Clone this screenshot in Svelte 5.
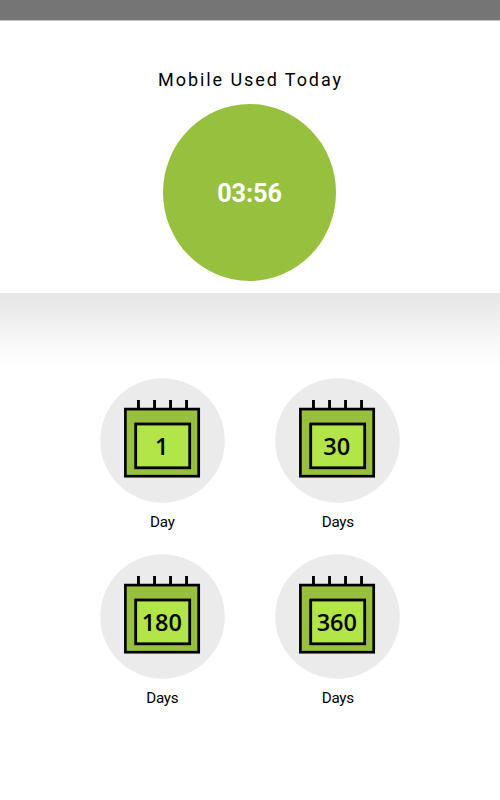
<script>
  const periods = [
    { value: '1', label: 'Day' },
    { value: '30', label: 'Days' },
    { value: '180', label: 'Days' },
    { value: '360', label: 'Days' }
  ];
  const pins = [37, 53.1, 69.1, 85.1];
</script>

<div class="screen">
  <div class="status"></div>
  <main>
    <section class="today">
      <h1>Mobile Used Today</h1>
      <div class="dial"><span>03:56</span></div>
    </section>
    <section class="history">
      <div class="grid">
        {#each periods as p}
          <div class="item">
            <svg width="125" height="125" viewBox="0 0 125 125">
              <circle cx="62.5" cy="62.5" r="62.3" fill="#ebebeb" />
              {#each pins as x}
                <rect {x} y="22" width="2.9" height="8.5" fill="#000" />
              {/each}
              <rect x="25.4" y="31.1" width="73.3" height="67.1" fill="#98c03f" stroke="#000" stroke-width="2.7" />
              <rect x="35.7" y="46" width="54" height="43.8" fill="#b2e548" stroke="#000" stroke-width="2.8" />
              <text x="61.8" y="76.9" text-anchor="middle">{p.value}</text>
            </svg>
            <p>{p.label}</p>
          </div>
        {/each}
      </div>
    </section>
  </main>
</div>

<style>
  :global(body) {
    margin: 0;
    background: #fff;
  }
  .screen {
    width: 500px;
    height: 800px;
    display: flex;
    flex-direction: column;
    background: #fff;
    color: #000;
    font-family: Roboto, sans-serif;
    overflow: hidden;
  }
  .status {
    height: 20px;
    flex: none;
    background: #757575;
    border-bottom: 1px solid #c4c4c4;
  }
  .today {
    height: 272px;
    display: flex;
    flex-direction: column;
    align-items: center;
  }
  h1 {
    margin: 48px 0 0 1px;
    font-size: 18px;
    line-height: 22px;
    font-weight: 400;
    letter-spacing: 1.93px;
    white-space: nowrap;
  }
  .dial {
    width: 173px;
    height: 177px;
    margin: 12.6px 1px 0 0;
    border-radius: 50%;
    background: #98c03f;
    display: flex;
    align-items: center;
    justify-content: center;
  }
  .dial span {
    color: #fff;
    font-size: 25.3px;
    line-height: 30px;
    font-weight: 700;
    letter-spacing: -0.1px;
    padding-top: 3px;
  }
  .history {
    padding-top: 85px;
    background: linear-gradient(#e6e6e6 0, #ebebeb 17px, #f4f4f4 38px, #fbfbfb 58px, #fff 78px);
  }
  .grid {
    display: grid;
    grid-template-columns: 125px 125px;
    column-gap: 50.5px;
    padding-left: 99.8px;
  }
  .item {
    height: 175.7px;
  }
  svg {
    display: block;
  }
  text {
    font-family: "Open Sans", "Noto Sans", sans-serif;
    font-size: 23.5px;
    font-weight: 600;
    fill: #000;
  }
  p {
    margin: 9px 0 0;
    text-align: center;
    font-size: 15.2px;
    line-height: 20px;
    letter-spacing: -0.25px;
  }
</style>
